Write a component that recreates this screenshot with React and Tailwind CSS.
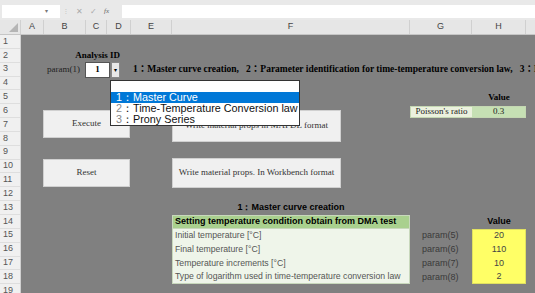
import React from "react";

const serif = { fontFamily: '"Liberation Serif", "Noto Sans CJK JP", serif' };
const cols = ["A", "B", "C", "D", "E", "F", "G", "H"];
const colW = ["w-[23px]", "w-[42px]", "w-[21px]", "w-[24px]", "w-[41px]", "w-[238px]", "w-[62px]", "w-[54px]"];

const tableRows = [
  { label: "Initial temperature [°C]", param: "param(5)", value: "20" },
  { label: "Final temperature [°C]", param: "param(6)", value: "110" },
  { label: "Temperature increments [°C]", param: "param(7)", value: "10" },
  { label: "Type of logarithm used in time-temperature conversion law", param: "param(8)", value: "2" },
];

function SheetButton({ className, children }) {
  return (
    <div
      className={`absolute flex items-center justify-center bg-[#f0f0f0] border border-[#d0d0d0] text-[9px] text-[#333] whitespace-nowrap ${className}`}
      style={serif}
    >
      {children}
    </div>
  );
}

export default function App() {
  return (
    <div className="w-[535px] h-[293px] overflow-hidden bg-[#808080] font-['Liberation_Sans',sans-serif] select-none">
      {/* Formula bar */}
      <div className="h-[20px] bg-[#e9e9e9] flex items-start pt-[5px] gap-[2px]">
        <div className="ml-[2px] w-[58px] h-[13px] bg-white flex items-center justify-end pr-[12px] text-[6px] text-[#777]">▾</div>
        <div className="w-[8px] text-[7px] text-[#bbb] leading-[13px] text-center">⁝</div>
        <div className="flex items-center h-[13px] gap-[7px] text-[8px] text-[#aaa] pl-[4px] w-[48px]">
          <span>✕</span>
          <span>✓</span>
          <span className="italic text-[#666] text-[7px]" style={serif}>fx</span>
        </div>
        <div className="flex-1 h-[13px] bg-white" />
      </div>

      {/* Column headers */}
      <div className="h-[15px] flex bg-[#e6e6e6] border-b border-[#c6c6c6] text-[9px] text-[#444]">
        <div className="w-[21px] relative border-r border-[#d0d0d0]">
          <div className="absolute right-[2px] bottom-[2px] w-0 h-0 border-l-[9px] border-l-transparent border-b-[9px] border-b-[#b5b5b5]" />
        </div>
        {cols.map((c, i) => (
          <div key={c} className={`${colW[i]} flex items-center justify-center border-r border-[#d0d0d0]`}>
            {c}
          </div>
        ))}
        <div className="flex-1" />
      </div>

      <div className="flex">
        {/* Row headers */}
        <div className="w-[21px] bg-[#f0f0f0] border-r border-[#d0d0d0] grid grid-rows-[repeat(19,13.85px)] text-[9px] text-[#555]">
          {Array.from({ length: 19 }, (_, i) => (
            <div key={i} className="border-b border-[#dedede] pl-[3px] flex items-center">
              {i + 1}
            </div>
          ))}
        </div>

        {/* Sheet */}
        <div className="relative flex-1 grid grid-cols-[23px_42px_21px_24px_41px_238px_62px_54px_1fr] grid-rows-[repeat(19,13.85px)] text-[9px]">
          <div className="row-start-2 col-start-2 col-span-3 flex items-center justify-end pr-[11px] font-bold text-black" style={serif}>
            Analysis ID
          </div>

          <div className="row-start-3 col-start-2 flex items-center justify-end pr-[6px] text-[#222]" style={serif}>
            param(1)
          </div>
          <div className="row-start-3 col-start-5 col-span-5 flex items-center pl-[2px] font-bold text-[9.5px] text-black whitespace-pre" style={serif}>
            1：Master curve creation,   2：Parameter identification for time-temperature conversion law,   3：Prony Series
          </div>

          <div className="row-start-5 col-start-8 flex items-center justify-center font-bold text-black" style={serif}>
            Value
          </div>
          <div className="row-start-6 col-start-7 mt-[2px] bg-[#ebf1de] border-y border-l border-[#c4d7b2] flex items-center justify-center text-[#222]" style={serif}>
            Poisson's ratio
          </div>
          <div className="row-start-6 col-start-8 mt-[2px] bg-[#c6e0b4] border-y border-r border-[#c4d7b2] flex items-center justify-center text-[#222]" style={serif}>
            0.3
          </div>

          <div className="row-start-13 col-start-6 flex items-center justify-center font-bold text-black">
            1：Master curve creation
          </div>

          <div className="row-start-14 col-start-6 bg-[#a9d08e] border border-[#c8d8bc] flex items-center pl-[2px] font-bold text-black">
            Setting temperature condition obtain from DMA test
          </div>
          <div className="row-start-14 col-start-8 flex items-center justify-center font-bold text-black">
            Value
          </div>

          {tableRows.map((r, i) => (
            <React.Fragment key={r.param}>
              <div
                className={`col-start-6 bg-[#eff5ea] border-x border-[#c8d8bc] flex items-center pl-[2px] text-[8.7px] text-[#555] whitespace-nowrap ${i === 3 ? "border-b" : ""}`}
                style={{ gridRowStart: 15 + i }}
              >
                {r.label}
              </div>
              <div className="col-start-7 flex items-center pl-[12px] text-[#3a3a3a]" style={{ gridRowStart: 15 + i }}>
                {r.param}
              </div>
              <div
                className={`col-start-8 bg-[#ffff66] border-x border-[#e0e060] flex items-center justify-center text-[#444] ${i === 3 ? "border-b" : ""} ${i === 0 ? "border-t" : ""}`}
                style={{ gridRowStart: 15 + i }}
              >
                {r.value}
              </div>
            </React.Fragment>
          ))}

          {/* Floating buttons */}
          <SheetButton className="left-[22px] top-[75px] w-[87px] h-[28px]">Execute</SheetButton>
          <SheetButton className="left-[22px] top-[124px] w-[87px] h-[28px]">Reset</SheetButton>
          <SheetButton className="left-[151px] top-[75px] w-[169px] h-[32px]">Write material props in MAPDL format</SheetButton>
          <SheetButton className="left-[151px] top-[123px] w-[169px] h-[30px]">Write material props. In Workbench format</SheetButton>

          {/* Combo box */}
          <div className="absolute left-[64px] top-[27px] w-[25px] h-[16px] bg-white border border-[#555] flex items-center justify-center font-bold text-[9px] text-black" style={serif}>
            1
          </div>
          <div className="absolute left-[90px] top-[27px] w-[9px] h-[16px] bg-[#e8e8e8] border border-[#888] flex items-center justify-center text-[6px] text-black">
            ▾
          </div>

          {/* Dropdown list */}
          <div className="absolute left-[89px] top-[45px] w-[190px] h-[46px] bg-white border border-[#333] text-[10.8px] text-[#111] leading-none whitespace-nowrap overflow-hidden">
            <div className="h-[11px]" />
            <div className="h-[11px] bg-[#0078d7] text-white flex items-center pl-[5px]">
              <span className="font-light">1</span>：Master Curve
            </div>
            <div className="h-[11px] flex items-center pl-[5px]">
              <span className="text-[#888] font-light">2</span>：Time-Temperature Conversion law
            </div>
            <div className="h-[11px] flex items-center pl-[5px]">
              <span className="text-[#888] font-light">3</span>：Prony Series
            </div>
          </div>
        </div>
      </div>
    </div>
  );
}
